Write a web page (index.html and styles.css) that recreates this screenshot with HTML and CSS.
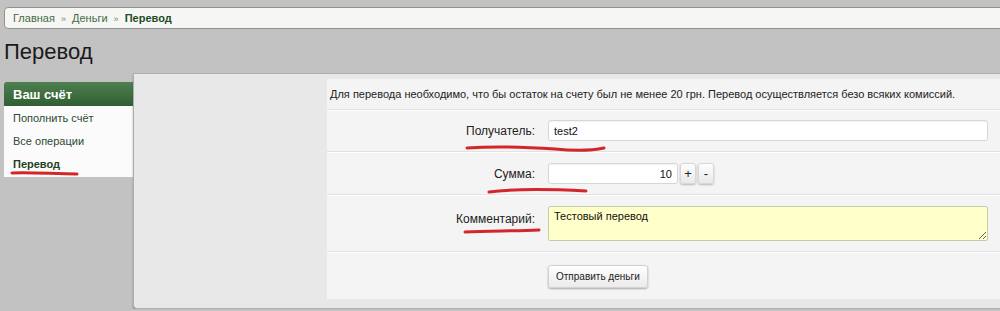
FILE: index.html
```html
<!DOCTYPE html>
<html lang="ru">
<head>
    <meta charset="UTF-8">
    <meta name="viewport" content="width=device-width, initial-scale=1.0">
    <title>Перевод</title>
    <link rel="stylesheet" href="styles.css">
</head>
<body>
    <div class="breadcrumbs">
        <a href="#">Главная</a> <span class="sep">»</span>
        <a href="#">Деньги</a> <span class="sep">»</span>
        <span class="current">Перевод</span>
    </div>

    <h1 class="page-title">Перевод</h1>

    <div class="layout">
        <div class="sidebar">
            <div class="sidebar-head">Ваш счёт</div>
            <a class="sidebar-item" href="#">Пополнить счёт</a>
            <a class="sidebar-item" href="#">Все операции</a>
            <a class="sidebar-item active" href="#">Перевод
                <svg class="scribble scribble-side" width="70" height="8" viewBox="0 0 70 8"><path d="M2 4 C 20 3, 45 5, 67 5"/></svg>
            </a>
        </div>

        <div class="main">
            <div class="content">
                <p class="intro">Для перевода необходимо, что бы остаток на счету был не менее 20 грн. Перевод осуществляется безо всяких комиссий.</p>

                <div class="form-row">
                    <label class="form-label">Получатель:
                        <svg class="scribble scribble-recipient" width="142" height="10" viewBox="0 0 142 10"><path d="M2 4 C 30 2, 60 3, 90 5 C 110 7, 125 7, 139 4"/></svg>
                    </label>
                    <div class="form-field"><input class="text-input wide" type="text" value="test2"></div>
                </div>

                <div class="form-row">
                    <label class="form-label">Сумма:
                        <svg class="scribble scribble-sum" width="104" height="10" viewBox="0 0 104 10"><path d="M2 6 C 25 3, 60 3, 99 5"/></svg>
                    </label>
                    <div class="form-field">
                        <input class="text-input amount" type="text" value="10">
                        <button class="step-btn" type="button">+</button>
                        <button class="step-btn" type="button">-</button>
                    </div>
                </div>

                <div class="form-row">
                    <label class="form-label top">Комментарий:
                        <svg class="scribble scribble-comment" width="80" height="10" viewBox="0 0 80 10"><path d="M2 6 C 25 5, 52 5, 76 4"/></svg>
                    </label>
                    <div class="form-field"><textarea class="comment">Тестовый перевод</textarea></div>
                </div>

                <div class="form-row submit-row">
                    <div class="form-label"></div>
                    <div class="form-field"><button class="submit-btn" type="submit">Отправить деньги</button></div>
                </div>
            </div>
        </div>
    </div>
</body>
</html>
```

FILE: styles.css
```css
html {
    overflow: hidden;
}

body {
    margin: 0;
    padding: 7px 0 0 4px;
    background-color: #c2c2c2;
    font-family: "Liberation Sans", Arial, sans-serif;
    font-size: 11px;
    color: #222;
}

.breadcrumbs {
    height: 20px;
    line-height: 20px;
    margin-right: -20px;
    padding-left: 8px;
    background-color: #f6f6f4;
    border: 1px solid #8f948f;
    border-radius: 4px;
}

.breadcrumbs a {
    color: #3f6b43;
    text-decoration: none;
}

.breadcrumbs .sep {
    color: #7a8a7a;
    font-size: 9px;
    margin: 0 3px;
}

.breadcrumbs .current {
    color: #1f4d26;
    font-weight: bold;
}

.page-title {
    margin: 0;
    height: 44px;
    line-height: 45px;
    font-size: 22px;
    font-weight: normal;
    color: #1a1a1a;
}

.layout {
    display: flex;
    align-items: flex-start;
}

.sidebar {
    width: 129px;
    margin-top: 9px;
    padding-bottom: 2px;
    background-color: #fbfbfb;
}

.sidebar-head {
    height: 24px;
    line-height: 25px;
    padding-left: 9px;
    background: linear-gradient(#4f8050, #2f5e33);
    color: #fff;
    font-size: 13px;
    font-weight: bold;
    border-radius: 2px 0 0 0;
}

.sidebar-item {
    position: relative;
    display: block;
    height: 23px;
    line-height: 24px;
    padding-left: 9px;
    color: #2b4a31;
    text-decoration: none;
}

.sidebar-item.active {
    font-weight: bold;
    color: #1f4024;
}

.main {
    flex: 1;
    margin-right: -20px;
    height: 229px;
    padding: 5px 0 0 193px;
    background-color: #e8e8e8;
    border: 1px solid #a9b1ab;
    border-radius: 0 0 0 4px;
    box-shadow: 0 2px 2px rgba(80, 90, 80, 0.5);
}

.content {
    background-color: #f4f4f4;
    padding-bottom: 1px;
}

.intro {
    margin: 0;
    padding: 9px 3px 9px;
    line-height: 12px;
    border-bottom: 1px solid #e2e2e2;
}

.form-row {
    display: grid;
    grid-template-columns: 208px 440px;
    column-gap: 13px;
    align-items: center;
    padding: 9px 0 10px;
    border-top: 1px solid #fff;
    border-bottom: 1px solid #e2e2e2;
}

.form-row + .form-row {
    padding-top: 10px;
}

.form-label {
    position: relative;
    text-align: right;
    font-size: 12px;
    color: #222;
}

.form-label.top {
    align-self: start;
    padding-top: 6px;
}

.form-field {
    display: flex;
    align-items: center;
    gap: 2px;
}

.text-input {
    box-sizing: border-box;
    height: 21px;
    padding: 0 5px;
    border: 1px solid #d6d6d6;
    border-radius: 3px;
    background-color: #fff;
    font-family: "Liberation Sans", Arial, sans-serif;
    font-size: 11px;
    color: #111;
    box-shadow: inset 0 1px 1px rgba(0, 0, 0, 0.05);
}

.text-input.wide {
    width: 440px;
}

.text-input.amount {
    width: 130px;
    text-align: right;
}

.step-btn {
    width: 16px;
    height: 21px;
    padding: 0;
    margin-left: 0;
    border: 1px solid #d8d8d8;
    border-radius: 3px;
    background: linear-gradient(#fdfdfd, #e9e9e9);
    box-shadow: 0 1px 2px rgba(0, 0, 0, 0.25);
    font-family: "Liberation Sans", Arial, sans-serif;
    font-size: 13px;
    color: #222;
}

.comment {
    box-sizing: border-box;
    width: 440px;
    height: 35px;
    padding: 3px 5px;
    border: 1px solid #c9c9b0;
    border-radius: 2px;
    background-color: #ffffc9;
    font-family: "Liberation Sans", Arial, sans-serif;
    font-size: 11px;
    color: #111;
}

.submit-row {
    border-bottom: none;
}

.form-row.submit-row {
    padding-top: 12px;
}

.submit-btn {
    height: 23px;
    padding: 0 7px;
    border: 1px solid #d2d2d2;
    border-radius: 3px;
    background: linear-gradient(#fefefe, #ebebeb);
    box-shadow: 0 1px 2px rgba(0, 0, 0, 0.3);
    font-family: "Liberation Sans", Arial, sans-serif;
    font-size: 10px;
    color: #222;
}

.scribble {
    position: absolute;
    fill: none;
    stroke: #d3262a;
    stroke-width: 3;
    stroke-linecap: round;
}

.scribble-side {
    left: 6px;
    top: 17px;
}

.scribble-recipient {
    left: 138px;
    top: 20px;
}

.scribble-sum {
    left: 160px;
    top: 19px;
}

.scribble-comment {
    left: 136px;
    top: 20px;
}
```
